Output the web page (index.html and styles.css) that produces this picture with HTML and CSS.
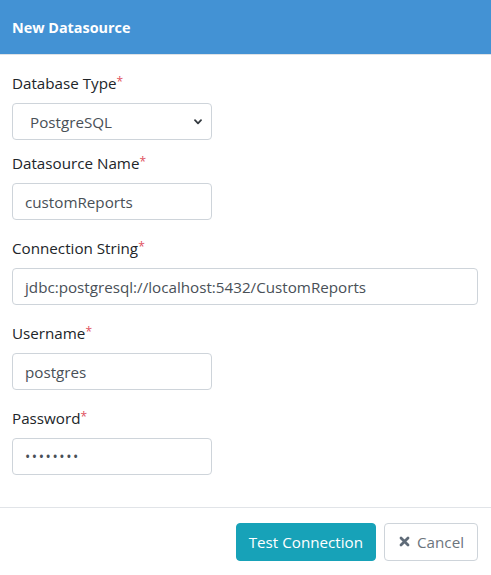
FILE: index.html
```html
<!DOCTYPE html>
<html>
<head>
<meta charset="utf-8">
<link rel="stylesheet" href="styles.css">
</head>
<body>
<div class="modal">
  <div class="modal-header">
    <h4 class="modal-title">New Datasource</h4>
  </div>
  <div class="modal-body">
    <div class="form-group group-select">
      <label class="form-label">Database Type<span class="req">*</span></label>
      <div class="select short">
        <span class="select-value">PostgreSQL</span>
        <svg class="chevron" viewBox="0 0 8 6" width="8" height="6"><path d="M1 1.2 L4 4.3 L7 1.2" fill="none" stroke="#343a40" stroke-width="1.8" stroke-linecap="round" stroke-linejoin="round"/></svg>
      </div>
    </div>
    <div class="form-group">
      <label class="form-label">Datasource Name<span class="req">*</span></label>
      <div class="input short">customReports</div>
    </div>
    <div class="form-group">
      <label class="form-label">Connection String<span class="req">*</span></label>
      <div class="input">jdbc:postgresql://localhost:5432/CustomReports</div>
    </div>
    <div class="form-group">
      <label class="form-label">Username<span class="req">*</span></label>
      <div class="input short">postgres</div>
    </div>
    <div class="form-group">
      <label class="form-label">Password<span class="req">*</span></label>
      <div class="input short password">••••••••</div>
    </div>
  </div>
  <div class="modal-footer">
    <button class="btn btn-info">Test Connection</button>
    <button class="btn btn-default">
      <svg class="times" viewBox="0 0 11 11" width="11" height="11"><path d="M2 2 L9 9 M9 2 L2 9" stroke="#5f6b78" stroke-width="2.8" stroke-linecap="round"/></svg>
      <span>Cancel</span>
    </button>
  </div>
</div>
</body>
</html>
```

FILE: styles.css
```css
html, body {
  margin: 0;
  padding: 0;
  background: #ffffff;
}
body {
  font-family: "Open Sans", "Noto Sans", sans-serif;
  color: #212529;
  font-size: 15px;
}
.modal {
  width: 491px;
  height: 575px;
  display: flex;
  flex-direction: column;
}
.modal-header {
  height: 54px;
  background: #4392d4;
  border-bottom: 1px solid #dee2e6;
  display: flex;
  align-items: center;
  padding: 0 12px;
}
.modal-title {
  margin: 0;
  color: #ffffff;
  font-weight: 700;
  font-size: 14.4px;
}
.modal-body {
  padding: 19px 13px 0 12px;
  flex: 1;
}
.form-group {
  margin-bottom: 19px;
}
.group-select {
  margin-bottom: 14px;
}
.form-label {
  display: block;
  line-height: 18px;
  margin-bottom: 11px;
  font-size: 15.2px;
}
.req {
  color: #e0505e;
  font-size: 12px;
  vertical-align: top;
  line-height: 15px;
}
.input, .select {
  box-sizing: border-box;
  height: 37px;
  border: 1px solid #ced4da;
  border-radius: 4px;
  padding: 0 12px;
  display: flex;
  align-items: center;
  color: #495057;
  font-size: 15.2px;
}
.short {
  width: 200px;
}
.select {
  justify-content: space-between;
  padding: 0 9px 0 17px;
}
.password {
  letter-spacing: 1.6px;
  font-size: 14px;
}
.modal-footer {
  border-top: 1px solid #e1e4e8;
  height: 68px;
  box-sizing: border-box;
  display: flex;
  justify-content: flex-end;
  align-items: center;
  padding: 0 13px 0 0;
  gap: 8px;
}
.btn {
  box-sizing: border-box;
  height: 38px;
  border-radius: 4px;
  font-family: inherit;
  font-size: 15.2px;
  display: flex;
  align-items: center;
  cursor: pointer;
}
.btn-info {
  background: #17a2b8;
  border: 1px solid #17a2b8;
  color: #ffffff;
  padding: 0 12px;
}
.btn-default {
  background: #ffffff;
  border: 1px solid #ced4da;
  color: #6c757d;
  padding: 0 13px 0 14px;
  gap: 7px;
}
```
